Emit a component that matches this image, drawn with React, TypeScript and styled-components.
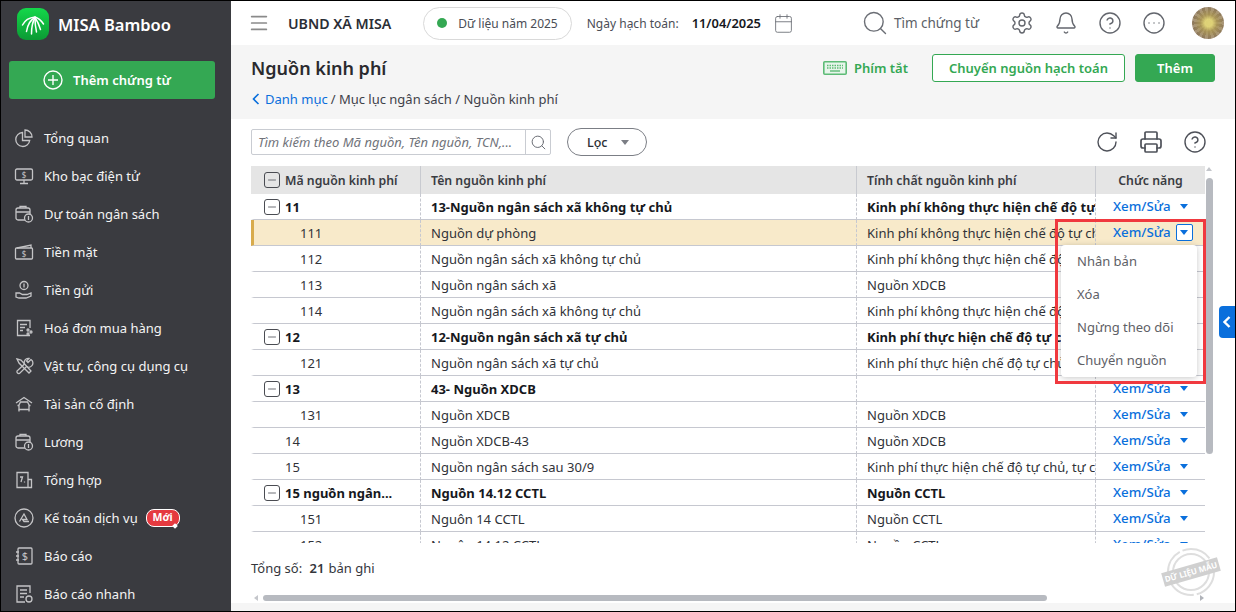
import React from 'react';
import { createGlobalStyle, styled } from 'styled-components';
import { Bell, Calendar, CircleEllipsis, CircleHelp, Menu, Minus, Printer, RotateCw, Search, Settings } from 'lucide-react';

const GlobalStyle = createGlobalStyle`
  * { box-sizing: border-box; }
  html, body { margin: 0; padding: 0; overflow: hidden; }
  body { font-family: "Noto Sans", "Liberation Sans", sans-serif; font-size: 13px; color: #212121; }
`;

const GREEN = '#34a853';
const BLUE = '#0a6fdc';

const Root = styled.div`
  position: relative;
  display: flex;
  width: 1236px;
  height: 612px;
  border: 1px solid #000;
  overflow: hidden;
  background: #f5f5f5;
`;

const Sidebar = styled.aside`
  flex: 0 0 230px;
  display: flex;
  flex-direction: column;
  background: #3a3b40;
  color: #fff;
`;

const Brand = styled.div`
  flex: none;
  display: flex;
  align-items: center;
  gap: 9px;
  height: 46px;
  padding: 0 0 0 16px;
  font-size: 16.5px;
  font-weight: 600;
`;

const AddButton = styled.button`
  flex: none;
  display: flex;
  align-items: center;
  gap: 10px;
  width: 206px;
  height: 38px;
  margin: 14px 0 20px 8px;
  padding: 0 0 0 34px;
  border: 0;
  border-radius: 3px;
  background: ${GREEN};
  color: #fff;
  font: 600 13px "Noto Sans", sans-serif;
`;

const NavList = styled.nav`
  flex: none;
  display: flex;
  flex-direction: column;
`;

const NavItem = styled.div`
  display: flex;
  align-items: center;
  flex: 0 0 38px;
  height: 38px;
  gap: 10px;
  padding-left: 13px;
  font-size: 13px;
  color: #f4f4f4;
  white-space: nowrap;
`;

const NavIcon = styled.svg`
  width: 20px;
  height: 20px;
  flex: none;
  fill: none;
  stroke: #c4c4c6;
  stroke-width: 1.3;
`;

const NewBadge = styled.span`
  position: relative;
  margin-left: -2px;
  width: 34px;
  height: 18px;
  line-height: 15px;
  text-align: center;
  border: 1.5px solid #fff;
  border-radius: 8px;
  background: #e53a40;
  color: #fff;
  font-size: 10.5px;
  font-weight: 700;
  &::after {
    content: '';
    position: absolute;
    right: 2px;
    bottom: -2px;
    width: 4px;
    height: 4px;
    background: #fff;
    transform: rotate(45deg);
  }
`;

const Main = styled.main`
  flex: 1;
  min-width: 0;
  display: flex;
  flex-direction: column;
`;

const TopBar = styled.header`
  flex: 0 0 44px;
  display: flex;
  align-items: center;
  background: #fff;
  padding-left: 17px;
  color: #3a3d45;
`;

const OrgName = styled.div`
  margin-left: 18px;
  font-weight: 600;
  font-size: 14.2px;
  color: #2b2e36;
`;

const YearPill = styled.div`
  display: flex;
  align-items: center;
  gap: 11px;
  height: 33px;
  margin-left: 32px;
  padding: 0 13px;
  border: 1px solid #d9d9d9;
  border-radius: 17px;
  font-size: 12px;
  color: #4a4d55;
`;

const Dot = styled.span`
  width: 10px;
  height: 10px;
  border-radius: 50%;
  background: ${GREEN};
`;

const DateLabel = styled.span`
  margin-left: 15px;
  font-size: 12px;
  color: #4a4d55;
`;

const DateValue = styled.span`
  margin-left: 13px;
  font-size: 12.9px;
  font-weight: 600;
  color: #16181d;
`;

const CalendarWrap = styled.span`
  display: flex;
  margin-left: 12px;
  color: #6c6f76;
`;

const FindDoc = styled.div`
  display: flex;
  align-items: center;
  gap: 5px;
  margin-left: 67px;
  font-size: 13.5px;
  color: #5c5f67;
`;

const TopIcons = styled.div`
  display: flex;
  align-items: center;
  gap: 20px;
  margin-left: 31px;
  color: #63666d;
`;

const Avatar = styled.div`
  width: 32px;
  height: 32px;
  margin-left: 26px;
  border-radius: 50%;
  background:
    radial-gradient(circle at 52% 50%, rgba(226, 214, 120, 0.95) 0 16%, rgba(176, 156, 84, 0.75) 36%, rgba(140, 112, 84, 0) 66%),
    repeating-conic-gradient(#8f7a5c 0 12deg, #a8957a 12deg 24deg);
`;

const PageHead = styled.section`
  flex: 0 0 74px;
  display: flex;
  justify-content: space-between;
  padding: 9px 20px 0 20px;
`;

const Title = styled.h1`
  margin: 0;
  font-size: 18px;
  line-height: 28px;
  font-weight: 600;
  color: #2a2a2e;
`;

const Crumbs = styled.div`
  display: flex;
  align-items: center;
  margin-top: 8px;
  padding-left: 1px;
  font-size: 13px;
  line-height: 18px;
  color: #3f424a;
  a { color: ${BLUE}; margin: 0 3px 0 5px; }
`;

const HeadActions = styled.div`
  display: flex;
  align-items: flex-start;
  gap: 10px;
`;

const Shortcut = styled.div`
  display: flex;
  align-items: center;
  gap: 7px;
  height: 28px;
  margin-right: 14px;
  color: ${GREEN};
  font-size: 13px;
  font-weight: 600;
`;

const Btn = styled.button<{ $solid?: boolean }>`
  height: 28px;
  width: ${p => (p.$solid ? '80px' : '193px')};
  padding: 0;
  border: 1px solid ${GREEN};
  border-radius: 3px;
  background: ${p => (p.$solid ? GREEN : '#fff')};
  color: ${p => (p.$solid ? '#fff' : GREEN)};
  font: 600 13px "Noto Sans", sans-serif;
`;

const Content = styled.section`
  position: relative;
  flex: 1;
  min-height: 0;
  display: flex;
  flex-direction: column;
  background: #fff;
  padding: 9px 0 0 20px;
`;

const BottomStrip = styled.div`
  flex: 0 0 8px;
  background: #f5f5f5;
`;

const Toolbar = styled.div`
  display: flex;
  align-items: center;
  height: 28px;
  margin-bottom: 10px;
`;

const SearchBox = styled.div`
  display: flex;
  width: 300px;
  height: 26px;
  border: 1px solid #c9ccd2;
  border-radius: 2px;
  font-size: 13px;
  font-style: italic;
  color: #70737a;
  span {
    flex: 1;
    min-width: 0;
    overflow: hidden;
    padding-left: 6px;
    line-height: 24px;
    border-right: 1px solid #c9ccd2;
    white-space: nowrap;
  }
  i { display: flex; flex: none; align-items: center; justify-content: center; width: 24px; color: #6a6d74; }
`;

const FilterBtn = styled.div`
  display: flex;
  align-items: center;
  justify-content: space-between;
  width: 80px;
  height: 28px;
  margin-left: 16px;
  padding: 0 17px 0 19px;
  border: 1px solid #7b7e85;
  border-radius: 14px;
  font-size: 12.5px;
  font-weight: 500;
  color: #2d2f35;
`;

const Caret = styled.span<{ $color: string }>`
  width: 0;
  height: 0;
  border-left: 4.5px solid transparent;
  border-right: 4.5px solid transparent;
  border-top: 5px solid ${p => p.$color};
`;

const ToolIcons = styled.div`
  display: flex;
  align-items: center;
  gap: 20px;
  margin-left: auto;
  margin-right: 28px;
  color: #4e5159;
`;

const TableClip = styled.div`
  flex: none;
  width: 954px;
  height: 377px;
  overflow: hidden;
`;

const Table = styled.table`
  width: 954px;
  table-layout: fixed;
  border-collapse: separate;
  border-spacing: 0;
`;

const Col = styled.col<{ $w: number }>`
  width: ${p => p.$w}px;
`;

const Th = styled.th`
  height: 28px;
  padding: 0 10px;
  background: #e5e5e5;
  text-align: left;
  font-size: 12.3px;
  font-weight: 600;
  color: #3a3c42;
  border-right: 1px solid #c8cad0;
  white-space: nowrap;
  &:last-child { border-right: 0; text-align: center; }
`;

const HeadCode = styled.div`
  display: flex;
  align-items: center;
  gap: 5px;
  margin-left: 3px;
`;

const Tr = styled.tr<{ $selected?: boolean; $bold?: boolean }>`
  background: ${p => (p.$selected ? '#f8eaca' : '#fff')};
  font-weight: ${p => (p.$bold ? 700 : 400)};
  color: ${p => (p.$bold ? '#16181d' : '#303238')};
`;

const Td = styled.td`
  height: 26px;
  padding: 0 0 0 10px;
  font-size: 13px;
  border-bottom: 1px solid #c6c8d0;
  border-right: 1px dashed #c6c8d0;
  overflow: hidden;
  white-space: nowrap;
  &:last-child { border-right: 0; padding: 0 0 0 17px; }
`;

const CodeCell = styled(Td)<{ $selected?: boolean }>`
  padding-left: 0;
  border-left: 3px solid ${p => (p.$selected ? '#d8ab4c' : 'transparent')};
`;

const CodeInner = styled.div<{ $indent: number }>`
  display: flex;
  align-items: center;
  gap: 5px;
  padding-left: ${p => p.$indent}px;
`;

const TreeBox = styled.span`
  display: flex;
  align-items: center;
  justify-content: center;
  width: 16px;
  height: 16px;
  flex: none;
  border: 1px solid #4a4c52;
  border-radius: 3px;
  color: #6e7076;
`;

const ActionWrap = styled.div`
  display: flex;
  align-items: center;
  padding-bottom: 1px;
  color: ${BLUE};
  font-size: 13.3px;
  font-weight: 500;
`;

const ActionCaret = styled.span<{ $open?: boolean }>`
  display: flex;
  align-items: center;
  justify-content: center;
  width: 17px;
  height: 17px;
  margin-left: 5px;
  border: 1px solid ${p => (p.$open ? BLUE : 'transparent')};
  border-radius: 2px;
  background: ${p => (p.$open ? '#fff' : 'transparent')};
`;

const Footer = styled.div`
  margin-top: 16px;
  font-size: 13px;
  line-height: 18px;
  color: #34363c;
  b { margin: 0 4px 0 4px; font-weight: 600; }
`;

const RowMenu = styled.div`
  position: absolute;
  left: 830px;
  top: 126px;
  width: 136px;
  height: 132px;
  background: #fff;
  border-radius: 4px;
  box-shadow: 0 1px 6px rgba(0, 0, 0, 0.22);
  font-size: 13px;
  color: #5e6066;
  z-index: 2;
`;

const MenuItem = styled.div`
  height: 33px;
  line-height: 33px;
  padding-left: 16px;
`;

const RedFrame = styled.div`
  position: absolute;
  left: 824px;
  top: 100px;
  width: 151px;
  height: 165px;
  border: 3px solid #f0393f;
  z-index: 3;
  pointer-events: none;
`;

const VThumb = styled.div`
  position: absolute;
  left: 975px;
  top: 59px;
  width: 7px;
  height: 276px;
  border-radius: 4px;
  background: #b7bac0;
`;

const HTrack = styled.div`
  position: absolute;
  left: 32px;
  top: 476px;
  width: 784px;
  height: 6px;
  border-radius: 3px;
  background: #b7bac0;
`;

const ScrollArrow = styled.span<{ $dir: 'up' | 'left' | 'right'; $x: number; $y: number }>`
  position: absolute;
  left: ${p => p.$x}px;
  top: ${p => p.$y}px;
  width: 0;
  height: 0;
  border: 3px solid transparent;
  ${p => (p.$dir === 'up' ? 'border-bottom: 4px solid #c4c6cb;' : '')}
  ${p => (p.$dir === 'left' ? 'border-right: 4px solid #c4c6cb;' : '')}
  ${p => (p.$dir === 'right' ? 'border-left: 4px solid #b0b3b9;' : '')}
`;

const SideTab = styled.div`
  position: absolute;
  right: 0;
  top: 305px;
  display: flex;
  align-items: center;
  justify-content: center;
  width: 16px;
  height: 32px;
  border-radius: 4px 0 0 4px;
  background: ${BLUE};
  z-index: 4;
`;

const Stamp = styled.svg`
  position: absolute;
  right: 13px;
  bottom: 6px;
  width: 62px;
  height: 50px;
  z-index: 1;
`;

const StampText = styled.text`
  font-family: "Noto Sans", sans-serif;
  font-size: 8px;
  font-weight: 700;
  fill: #fff;
`;

const Ic = ({ children }: { children: React.ReactNode }) => <NavIcon viewBox="0 0 20 20">{children}</NavIcon>;

const Chevron = ({ color, width = 1.6 }: { color: string; width?: number }) => (
  <svg width="8" height="12" viewBox="0 0 8 12" fill="none" stroke={color} strokeWidth={width}>
    <path d="M6.500 1L1.500 6l5 5" />
  </svg>
);

const navItems: { label: string; icon: React.ReactNode; badge?: boolean }[] = [
  { label: 'Tổng quan', icon: <Ic><path d="M8.500 4.500a7 7 0 1 0 7.200 8h-7.200z" /><path d="M11 2a7 7 0 0 1 7 7h-7z" /></Ic> },
  { label: 'Kho bạc điện tử', icon: <Ic><rect x="1.500" y="3" width="17" height="11" rx="1.500" /><path d="M10 14v3M6 17.500h8" /><text x="10" y="12" fontSize="8" textAnchor="middle" fill="#c4c4c6" stroke="none">$</text></Ic> },
  { label: 'Dự toán ngân sách', icon: <Ic><rect x="2" y="4" width="14" height="12" rx="2" /><path d="M6 4V2.500h6V4M2 8h14" /><circle cx="14.500" cy="14" r="4" fill="#3a3b40" /><path d="M14.500 12v4" /></Ic> },
  { label: 'Tiền mặt', icon: <Ic><rect x="1.500" y="6" width="17" height="11" rx="1" /><path d="M3 6l14-3v3" /><text x="10" y="15" fontSize="8" textAnchor="middle" fill="#c4c4c6" stroke="none">$</text></Ic> },
  { label: 'Tiền gửi', icon: <Ic><circle cx="10" cy="5.500" r="4" /><path d="M10 3.500v4" /><path d="M2 13h3.500l3 1.500H13l4-1.500v3l-5 2H5l-3-1z" /></Ic> },
  { label: 'Hoá đơn mua hàng', icon: <Ic><path d="M16 10V2.500H3.500v15H16" /><path d="M6 6.500h7M6 9.500h5M6 12.500h3" /><circle cx="14" cy="12" r="1" /><circle cx="17" cy="14" r="1" /><circle cx="14" cy="16" r="1" /></Ic> },
  { label: 'Vật tư, công cụ dụng cụ', icon: <Ic><path d="M3 3l4 1 10 11-2 2L5 7z" /><path d="M17 3.500l-3 3-1.500-1.500 2.500-2.500a4 4 0 0 0-4.500 5.500L3 15a2 2 0 0 0 2.500 2.500l7-7A4 4 0 0 0 17 3.500z" /></Ic> },
  { label: 'Tài sản cố định', icon: <Ic><path d="M2 9l8-5.500L18 9" /><path d="M5 11l1.500-3h7l1.500 3v4.500H5z" /><path d="M5 15.500v2M15 15.500v2M3.500 11.500H5M15 11.500h1.500" /></Ic> },
  { label: 'Lương', icon: <Ic><rect x="2" y="4" width="14" height="12" rx="2" /><path d="M6 4V2.500h6V4M2 8h14" /><circle cx="14.500" cy="14" r="4" fill="#3a3b40" /><path d="M14.500 12v4" /></Ic> },
  { label: 'Tổng hợp', icon: <Ic><path d="M14 17.500H3V2.500h11zM14 9.500h3.500v8H14" /><path d="M6 7h2.500L7 12M10.500 11.500v1" /></Ic> },
  { label: 'Kế toán dịch vụ', badge: true, icon: <Ic><circle cx="10" cy="10" r="9" /><path d="M5.500 13.500L10 6l3 5.500H8.500l1.500 2h5" /></Ic> },
  { label: 'Báo cáo', icon: <Ic><rect x="4" y="2" width="14" height="16" rx="1" /><path d="M2 6h3M2 10h3M2 14h3" /><text x="11" y="14" fontSize="11" textAnchor="middle" fill="#c4c4c6" stroke="none">$</text></Ic> },
  { label: 'Báo cáo nhanh', icon: <Ic><path d="M16 9V2H3v16h8" /><path d="M6 6h7M6 9.500h7M6 13h4" /><circle cx="15" cy="15" r="3" /></Ic> },
];

type Row = { code: string; name: string; prop: string; kind: 'group' | 'child' | 'plain'; selected?: boolean };

const KP = 'Kinh phí không thực hiện chế độ tự chủ';
const KT = 'Kinh phí thực hiện chế độ tự chủ';

const rows: Row[] = [
  { code: '11', name: '13-Nguồn ngân sách xã không tự chủ', prop: KP, kind: 'group' },
  { code: '111', name: 'Nguồn dự phòng', prop: KP, kind: 'child', selected: true },
  { code: '112', name: 'Nguồn ngân sách xã không tự chủ', prop: KP, kind: 'child' },
  { code: '113', name: 'Nguồn ngân sách xã', prop: 'Nguồn XDCB', kind: 'child' },
  { code: '114', name: 'Nguồn ngân sách xã không tự chủ', prop: KP, kind: 'child' },
  { code: '12', name: '12-Nguồn ngân sách xã tự chủ', prop: KT, kind: 'group' },
  { code: '121', name: 'Nguồn ngân sách xã tự chủ', prop: KT, kind: 'child' },
  { code: '13', name: '43- Nguồn XDCB', prop: '', kind: 'group' },
  { code: '131', name: 'Nguồn XDCB', prop: 'Nguồn XDCB', kind: 'child' },
  { code: '14', name: 'Nguồn XDCB-43', prop: 'Nguồn XDCB', kind: 'plain' },
  { code: '15', name: 'Nguồn ngân sách sau 30/9', prop: 'Kinh phí thực hiện chế độ tự chủ, tự cân đối', kind: 'plain' },
  { code: '15 nguồn ngân...', name: 'Nguồn 14.12 CCTL', prop: 'Nguồn CCTL', kind: 'group' },
  { code: '151', name: 'Nguôn 14 CCTL', prop: 'Nguồn CCTL', kind: 'child' },
  { code: '152', name: 'Nguôn 14.12 CCTL', prop: 'Nguồn CCTL', kind: 'child' },
];

const indentOf = { group: 10, child: 46, plain: 31 };

export default function App() {
  return (
    <Root>
      <GlobalStyle />
      <Sidebar>
        <Brand>
          <svg width="32" height="32" viewBox="0 0 32 32">
            <defs>
              <linearGradient id="logo" x1="0" y1="0" x2="0" y2="1">
                <stop offset="0" stopColor="#14d84a" />
                <stop offset="1" stopColor="#0c9a34" />
              </linearGradient>
            </defs>
            <rect width="32" height="32" rx="9" fill="url(#logo)" />
            <g fill="none" stroke="#fff" strokeWidth="1.500" strokeLinecap="round">
              <path d="M18 9c-5 .5-10 3-12.500 8" />
              <path d="M18 9.500c-4 2-7 5-8.500 14" />
              <path d="M18 10c-2 3-3.500 7-3.500 16" />
              <path d="M18 10c0 4 .5 9 1.500 14" />
              <path d="M18 9.500c2 3 4 7 5.500 12" />
              <path d="M18 9c3 1 6 3 8.500 7" />
            </g>
          </svg>
          MISA Bamboo
        </Brand>
        <AddButton>
          <svg width="20" height="20" viewBox="0 0 20 20" fill="none" stroke="#fff" strokeWidth="1.400">
            <circle cx="10" cy="10" r="9" />
            <path d="M10 5v10M5 10h10" />
          </svg>
          Thêm chứng từ
        </AddButton>
        <NavList>
          {navItems.map(item => (
            <NavItem key={item.label}>
              {item.icon}
              {item.label}
              {item.badge && <NewBadge>Mới</NewBadge>}
            </NavItem>
          ))}
        </NavList>
      </Sidebar>

      <Main>
        <TopBar>
          <Menu size={22} strokeWidth={1.900} color="#8a8a8a" />
          <OrgName>UBND XÃ MISA</OrgName>
          <YearPill><Dot />Dữ liệu năm 2025</YearPill>
          <DateLabel>Ngày hạch toán:</DateLabel>
          <DateValue>11/04/2025</DateValue>
          <CalendarWrap><Calendar size={21} strokeWidth={1} /></CalendarWrap>
          <FindDoc><Search size={28} strokeWidth={1.200} color="#6b6e75" />Tìm chứng từ</FindDoc>
          <TopIcons>
            <Settings size={24} strokeWidth={1.400} />
            <Bell size={24} strokeWidth={1.400} />
            <CircleHelp size={24} strokeWidth={1.400} />
            <CircleEllipsis size={24} strokeWidth={1.400} />
          </TopIcons>
          <Avatar />
        </TopBar>

        <PageHead>
          <div>
            <Title>Nguồn kinh phí</Title>
            <Crumbs>
              <Chevron color={BLUE} />
              <a>Danh mục</a>/ Mục lục ngân sách / Nguồn kinh phí
            </Crumbs>
          </div>
          <HeadActions>
            <Shortcut>
              <svg width="24" height="14" viewBox="0 0 24 14" fill="none">
                <rect x="0.800" y="0.800" width="22.400" height="12.400" rx="1" stroke="#5dbb76" strokeWidth="1.600" fill="#e7f5eb" />
                <path d="M4 4.500h16M4 7h16" stroke="#5dbb76" strokeWidth="1.400" strokeDasharray="1.500 1" />
                <path d="M7 10h10" stroke="#5dbb76" strokeWidth="1.400" />
              </svg>
              Phím tắt
            </Shortcut>
            <Btn>Chuyển nguồn hạch toán</Btn>
            <Btn $solid>Thêm</Btn>
          </HeadActions>
        </PageHead>

        <Content>
          <Toolbar>
            <SearchBox>
              <span>Tìm kiếm theo Mã nguồn, Tên nguồn, TCN,...</span>
              <i><Search size={17} strokeWidth={1.400} /></i>
            </SearchBox>
            <FilterBtn>Lọc<Caret $color="#7b7e85" /></FilterBtn>
            <ToolIcons>
              <RotateCw size={24} strokeWidth={1.400} />
              <Printer size={24} strokeWidth={1.700} />
              <CircleHelp size={24} strokeWidth={1.400} />
            </ToolIcons>
          </Toolbar>

          <TableClip>
            <Table>
              <colgroup>
                <Col $w={170} />
                <Col $w={436} />
                <Col $w={239} />
                <Col $w={109} />
              </colgroup>
              <thead>
                <tr>
                  <Th><HeadCode><TreeBox><Minus size={12} /></TreeBox>Mã nguồn kinh phí</HeadCode></Th>
                  <Th>Tên nguồn kinh phí</Th>
                  <Th>Tính chất nguồn kinh phí</Th>
                  <Th>Chức năng</Th>
                </tr>
              </thead>
              <tbody>
                {rows.map(row => (
                  <Tr key={row.code} $selected={row.selected} $bold={row.kind === 'group'}>
                    <CodeCell $selected={row.selected}>
                      <CodeInner $indent={indentOf[row.kind]}>
                        {row.kind === 'group' && <TreeBox><Minus size={12} /></TreeBox>}
                        {row.code}
                      </CodeInner>
                    </CodeCell>
                    <Td>{row.name}</Td>
                    <Td>{row.prop}</Td>
                    <Td>
                      <ActionWrap>
                        Xem/Sửa
                        <ActionCaret $open={row.selected}><Caret $color={BLUE} /></ActionCaret>
                      </ActionWrap>
                    </Td>
                  </Tr>
                ))}
              </tbody>
            </Table>
          </TableClip>

          <Footer>Tổng số: <b>21</b>bản ghi</Footer>

          <RowMenu>
            <MenuItem>Nhân bản</MenuItem>
            <MenuItem>Xóa</MenuItem>
            <MenuItem>Ngừng theo dõi</MenuItem>
            <MenuItem>Chuyển nguồn</MenuItem>
          </RowMenu>
          <RedFrame />
          <ScrollArrow $dir="up" $x={975} $y={45} />
          <VThumb />
          <ScrollArrow $dir="left" $x={20} $y={476} />
          <HTrack />
          <ScrollArrow $dir="right" $x={969} $y={476} />
          <Stamp viewBox="0 0 62 50">
            <circle cx="31" cy="25" r="23" fill="none" stroke="#dedede" strokeWidth="2" strokeDasharray="30 3" />
            <circle cx="31" cy="25" r="18" fill="none" stroke="#dedede" strokeWidth="2" />
            <g transform="rotate(-16 31 25)">
              <rect x="2" y="18" width="58" height="14" fill="#d0d0d0" />
              <StampText x="31" y="28" textAnchor="middle">DỮ LIỆU MẪU</StampText>
            </g>
          </Stamp>
        </Content>
        <BottomStrip />
      </Main>
      <SideTab><Chevron color="#fff" width={2.400} /></SideTab>
    </Root>
  );
}
